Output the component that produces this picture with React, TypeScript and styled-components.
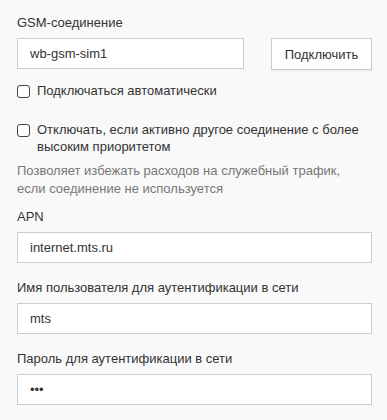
import styled, { createGlobalStyle } from "styled-components"

const Global = createGlobalStyle`
    html, body {
        margin: 0;
        padding: 0;
        background: #f9f9f9;
    }
    body {
        font-family: "Liberation Sans", Arial, sans-serif;
        font-size: 13px;
        color: #333;
    }
`

const Form = styled.div`
    padding: 14px 15px 0 17px;
    display: flex;
    flex-direction: column;
`

const Group = styled.div<{ $mb?: number }>`
    display: flex;
    flex-direction: column;
    margin-bottom: ${(p) => p.$mb ?? 16}px;
`

const Label = styled.label`
    line-height: 18px;
    margin-bottom: 6px;
`

const Row = styled.div`
    display: flex;
    align-items: flex-start;
    gap: 27px;
`

const Input = styled.input<{ $grow?: boolean }>`
    box-sizing: border-box;
    height: 31px;
    width: 100%;
    flex: ${(p) => (p.$grow ? "1 1 0" : "none")};
    padding: 0 12px;
    border: 1px solid #ccc;
    background: #fff;
    font-family: inherit;
    font-size: 13px;
    color: #333;
    outline: none;
`

const Button = styled.button`
    box-sizing: border-box;
    width: 101px;
    height: 32px;
    flex: none;
    border: 1px solid #ccc;
    background: #fff;
    box-shadow: 0 1px 1px rgba(0, 0, 0, 0.06);
    font-family: inherit;
    font-size: 13px;
    color: #333;
    cursor: pointer;
`

const Check = styled.label<{ $mb?: number }>`
    display: flex;
    align-items: flex-start;
    gap: 7px;
    line-height: 17px;
    margin-bottom: ${(p) => p.$mb ?? 0}px;
`

const Box = styled.span`
    box-sizing: border-box;
    flex: none;
    width: 13px;
    height: 13px;
    margin-top: 3px;
    border: 1px solid #444;
    border-radius: 3px;
    background: #fff;
`

const Help = styled.div`
    color: #777;
    line-height: 18px;
    margin: 7px 0 10px;
`

export default function App() {
    return (
        <>
            <Global />
            <Form>
                <Group $mb={12}>
                    <Label>GSM-соединение</Label>
                    <Row>
                        <Input $grow defaultValue="wb-gsm-sim1" />
                        <Button>Подключить</Button>
                    </Row>
                </Group>
                <Check $mb={22}>
                    <Box />
                    <span>Подключаться автоматически</span>
                </Check>
                <Check>
                    <Box />
                    <span>Отключать, если активно другое соединение с более высоким приоритетом</span>
                </Check>
                <Help>Позволяет избежать расходов на служебный трафик, если соединение не используется</Help>
                <Group>
                    <Label>APN</Label>
                    <Input defaultValue="internet.mts.ru" />
                </Group>
                <Group>
                    <Label>Имя пользователя для аутентификации в сети</Label>
                    <Input defaultValue="mts" />
                </Group>
                <Group>
                    <Label>Пароль для аутентификации в сети</Label>
                    <Input type="password" defaultValue="mts" />
                </Group>
            </Form>
        </>
    )
}
